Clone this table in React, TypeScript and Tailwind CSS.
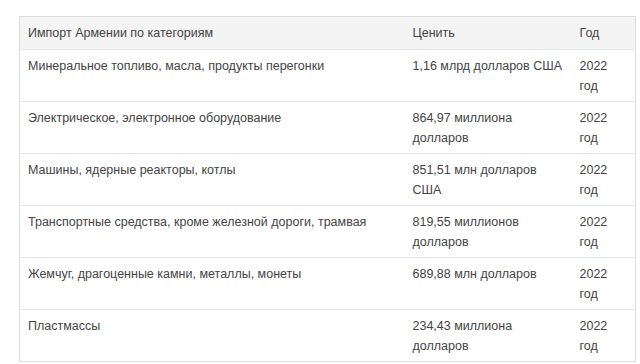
const ROWS: [string, string, string][] = [
  ["Минеральное топливо, масла, продукты перегонки", "1,16 млрд долларов США", "2022 год"],
  ["Электрическое, электронное оборудование", "864,97 миллиона долларов", "2022 год"],
  ["Машины, ядерные реакторы, котлы", "851,51 млн долларов США", "2022 год"],
  ["Транспортные средства, кроме железной дороги, трамвая", "819,55 миллионов долларов", "2022 год"],
  ["Жемчуг, драгоценные камни, металлы, монеты", "689,88 млн долларов", "2022 год"],
  ["Пластмассы", "234,43 миллиона долларов", "2022 год"],
];

export default function App() {
  return (
    <div className="w-[640px] h-[364px] overflow-hidden bg-white pt-4 pl-[19px] font-['Liberation_Sans',Arial,sans-serif] text-[12.5px] text-[#444]">
      <table className="w-[616px] table-fixed border-collapse border border-[#dddddd]">
        <colgroup>
          <col className="w-[385px]" />
          <col className="w-[167px]" />
          <col className="w-[64px]" />
        </colgroup>
        <thead>
          <tr className="bg-[#f4f4f4]">
            <th className="px-2 py-[6px] text-left font-normal leading-5">Импорт Армении по категориям</th>
            <th className="px-2 py-[6px] text-left font-normal leading-5">Ценить</th>
            <th className="px-2 py-[6px] text-left font-normal leading-5">Год</th>
          </tr>
        </thead>
        <tbody>
          {ROWS.map(r => (
            <tr key={r[0]} className="border-t border-[#e3e6ea] align-top">
              <td className="px-2 pt-[6px] pb-[5px] leading-5">{r[0]}</td>
              <td className="px-2 pt-[6px] pb-[5px] leading-5">{r[1]}</td>
              <td className="px-2 pt-[6px] pb-[5px] leading-5">{r[2]}</td>
            </tr>
          ))}
        </tbody>
      </table>
    </div>
  );
}
